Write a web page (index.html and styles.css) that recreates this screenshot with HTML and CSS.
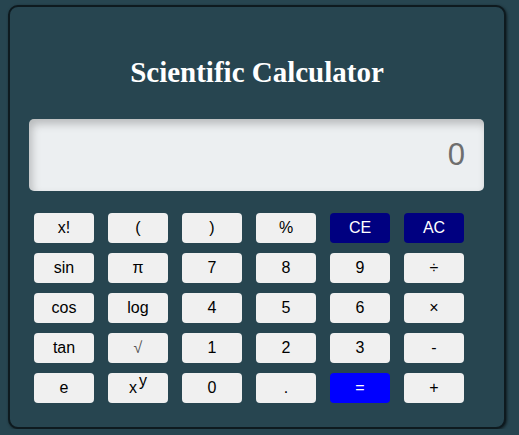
FILE: index.html
```html
<!DOCTYPE html>
<html>
<head>
<meta charset="utf-8">
<link rel="stylesheet" href="styles.css">
</head>
<body>
<div class="calc">
  <h1 class="title">Scientific Calculator</h1>
  <div class="display">0</div>
  <div class="keys">
    <button class="key">x!</button>
    <button class="key">(</button>
    <button class="key">)</button>
    <button class="key">%</button>
    <button class="key dark">CE</button>
    <button class="key dark">AC</button>

    <button class="key">sin</button>
    <button class="key">π</button>
    <button class="key">7</button>
    <button class="key">8</button>
    <button class="key">9</button>
    <button class="key">÷</button>

    <button class="key">cos</button>
    <button class="key">log</button>
    <button class="key">4</button>
    <button class="key">5</button>
    <button class="key">6</button>
    <button class="key">×</button>

    <button class="key">tan</button>
    <button class="key light">√</button>
    <button class="key">1</button>
    <button class="key">2</button>
    <button class="key">3</button>
    <button class="key">-</button>

    <button class="key">e</button>
    <button class="key">x<sup class="sup">y</sup></button>
    <button class="key">0</button>
    <button class="key">.</button>
    <button class="key equals">=</button>
    <button class="key">+</button>
  </div>
</div>
</body>
</html>
```

FILE: styles.css
```css
html, body {
  margin: 0;
  padding: 0;
  background: #274550;
}
body {
  padding: 5px 0 0 8px;
}
.calc {
  box-sizing: border-box;
  width: 498px;
  height: 424px;
  background: #274550;
  border: 2px solid #0e1a1f;
  border-radius: 10px;
  box-shadow: 1px 1px 3px rgba(0,0,0,0.6);
  padding: 0 19px 0 19px;
}
.title {
  margin: 0;
  padding-top: 50px;
  text-align: center;
  font-family: "Liberation Serif", "Times New Roman", serif;
  font-weight: bold;
  font-size: 29px;
  line-height: 30px;
  color: #ffffff;
  height: 30px;
  margin-bottom: 32px;
}
.display {
  box-sizing: border-box;
  width: 455px;
  height: 72px;
  background: #eceff1;
  border-radius: 5px;
  box-shadow: inset 3px 5px 8px rgba(0,0,0,0.22);
  font-family: "Liberation Sans", Arial, sans-serif;
  font-size: 31px;
  color: #6e6e6e;
  text-align: right;
  line-height: 72px;
  padding-right: 19px;
}
.keys {
  display: grid;
  grid-template-columns: repeat(6, 60px);
  grid-auto-rows: 30px;
  column-gap: 14px;
  row-gap: 10px;
  margin-top: 22px;
  padding-left: 5px;
}
.key {
  border: none;
  border-radius: 4px;
  background: #f0f0f0;
  color: #000;
  font-family: "Liberation Sans", Arial, sans-serif;
  font-size: 16px;
  padding: 0;
  margin: 0;
  line-height: 30px;
  text-align: center;
  position: relative;
}
.light {
  color: #555;
  font-weight: 300;
}
.dark {
  background: #000080;
  color: #fff;
}
.equals {
  background: #0000ff;
  color: #fff;
}
.sup {
  font-size: 16px;
  vertical-align: baseline;
  position: relative;
  top: -7px;
  margin-left: 2px;
}
```
